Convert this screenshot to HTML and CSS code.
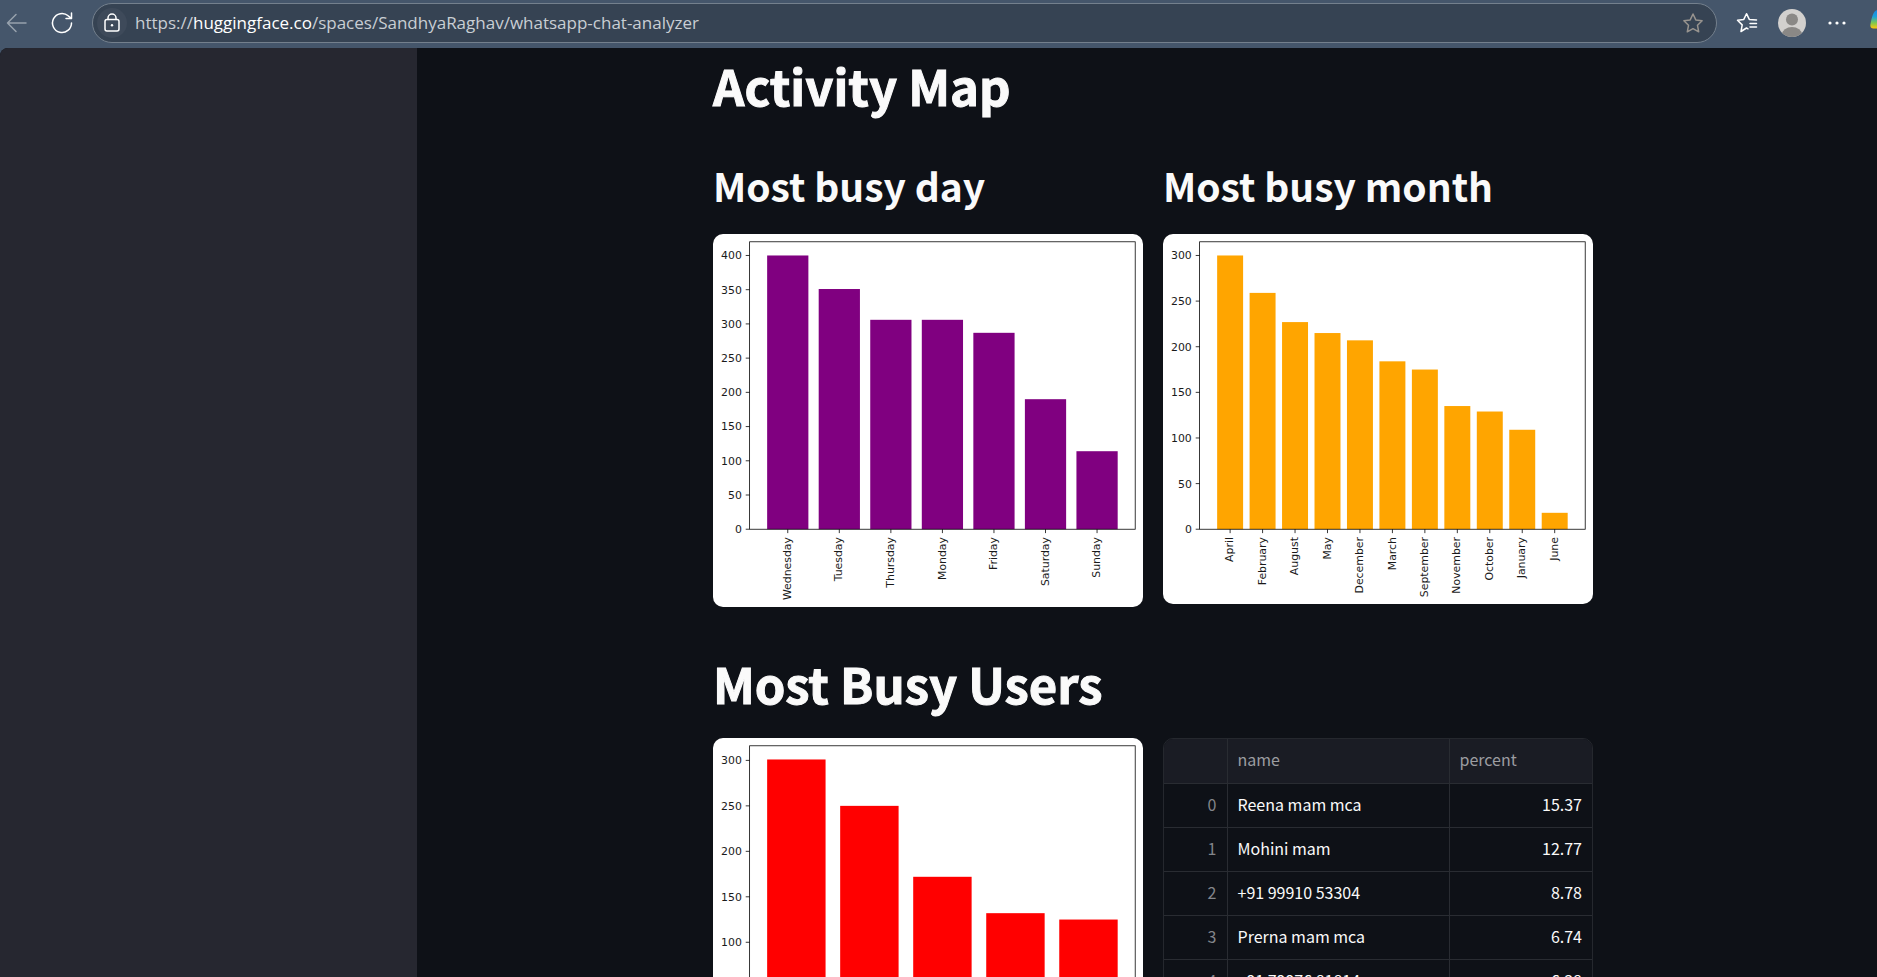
FILE: index.html
```html
<!DOCTYPE html>
<html lang="en">
<head>
<meta charset="utf-8">
<title>whatsapp-chat-analyzer</title>
<link rel="stylesheet" href="styles.css">
</head>
<body>
<header class="toolbar">
  <button class="tool tool-back" type="button" aria-label="Back">
    <svg width="22" height="22" viewBox="0 0 22 22"><path d="M20 11H1.500M10 2.500 1.500 11l8.500 8.500"/></svg>
  </button>
  <button class="tool tool-reload" type="button" aria-label="Reload">
    <svg width="24" height="24" viewBox="0 0 24 24"><path d="M21.500 12a9.500 9.500 0 1 1-3.300-7.200L21.500 7.500M21.500 2v5.500H16"/></svg>
  </button>
  <div class="address">
    <button class="site-info" type="button" aria-label="Site information">
      <svg width="20" height="22" viewBox="0 0 20 22"><rect x="3" y="7.500" width="14" height="11.500" rx="2"/><path d="M6 7.500V6a4 4 0 0 1 8 0v1.500"/><circle class="solid" cx="10" cy="13.300" r="1.200"/></svg>
    </button>
    <a class="url" href="#">https://<span class="host">huggingface.co</span>/spaces/SandhyaRaghav/whatsapp-chat-analyzer</a>
    <button class="tool tool-star" type="button" aria-label="Add to favorites">
      <svg width="22" height="22" viewBox="0 0 22 22"><path d="M11 2l2.800 5.900 6.300.9-4.600 4.500 1.200 6.500L11 16.700l-5.700 3.100 1.200-6.500L1.900 8.800l6.300-.9z"/></svg>
    </button>
  </div>
  <button class="tool tool-favorites" type="button" aria-label="Favorites">
    <svg width="22" height="22" viewBox="0 0 22 22"><path d="M12 16.800l-1.500-.8L5 19.500l1.200-6.600L1.500 8.300l6.300-.9L10.500 1.700l2.800 5.700 7.200.6M14 11.500h6.500M14 15h6.500"/></svg>
  </button>
  <button class="tool tool-profile" type="button" aria-label="Profile">
    <svg width="28" height="28" viewBox="0 0 28 28"><clipPath id="face"><circle cx="14" cy="14" r="14"/></clipPath><g clip-path="url(#face)"><path class="face-back" d="M0 0h28v28H0z"/><circle class="face-front" cx="14" cy="10.500" r="6"/><ellipse class="face-front" cx="14" cy="25.500" rx="10" ry="7.500"/></g></svg>
  </button>
  <button class="tool tool-more" type="button" aria-label="Settings and more">
    <svg width="18" height="4" viewBox="0 0 18 4"><circle cx="2" cy="2" r="1.600"/><circle cx="9" cy="2" r="1.600"/><circle cx="16" cy="2" r="1.600"/></svg>
  </button>
  <button class="tool tool-copilot" type="button" aria-label="Copilot">
    <svg width="7" height="22" viewBox="0 0 7 22"><defs><linearGradient id="pilot" x1="0" y1="0" x2="0" y2="1"><stop offset="0" stop-color="#1b86e0"/><stop offset=".35" stop-color="#1ba0dc"/><stop offset=".7" stop-color="#7ec850"/><stop offset="1" stop-color="#ffc60a"/></linearGradient></defs><path fill="url(#pilot)" d="M7 1C3 2.500 2 8 .5 15c-.6 3 .5 4.500 3 4.500H7z"/></svg>
  </button>
</header>
<div class="app">
  <aside class="sidebar"></aside>
  <main class="main">
    <div class="content">
      <h1 class="title">Activity Map</h1>
      <div class="columns">
        <section>
          <h2 class="subtitle">Most busy day</h2>
          <svg class="chart chart-day" id="chart-day" role="img" aria-label="Most busy day"></svg>
        </section>
        <section>
          <h2 class="subtitle">Most busy month</h2>
          <svg class="chart chart-month" id="chart-month" role="img" aria-label="Most busy month"></svg>
        </section>
      </div>
      <h1 class="title title-users">Most Busy Users</h1>
      <div class="columns">
        <svg class="chart chart-users" id="chart-users" role="img" aria-label="Most busy users"></svg>
        <div class="table-frame">
          <table class="users">
            <thead>
              <tr><th class="index"></th><th class="name">name</th><th class="percent">percent</th></tr>
            </thead>
            <tbody>
              <tr><td class="index">0</td><td class="name">Reena mam mca</td><td class="percent">15.37</td></tr>
              <tr><td class="index">1</td><td class="name">Mohini mam</td><td class="percent">12.77</td></tr>
              <tr><td class="index">2</td><td class="name">+91 99910 53304</td><td class="percent">8.78</td></tr>
              <tr><td class="index">3</td><td class="name">Prerna mam mca</td><td class="percent">6.74</td></tr>
              <tr><td class="index">4</td><td class="name">+91 79976 81814</td><td class="percent">6.38</td></tr>
            </tbody>
          </table>
        </div>
      </div>
    </div>
  </main>
</div>
<script src="charts.js"></script>
</body>
</html>
```

FILE: styles.css
```css
* { box-sizing: border-box; }

body {
  margin: 0;
  height: 100vh;
  display: flex;
  flex-direction: column;
  overflow: hidden;
  background: #45566b;
  color: #fafafa;
  font-family: "Noto Sans CJK SC", "Noto Sans", sans-serif;
}

button {
  display: flex;
  align-items: center;
  justify-content: center;
  padding: 0;
  border: 0;
  background: none;
}

/* Browser toolbar */
.toolbar {
  flex: none;
  display: flex;
  align-items: center;
  height: 48px;
  padding: 0 0 2px 5px;
  overflow: hidden;
}

.tool svg,
.site-info svg {
  display: block;
  fill: none;
  stroke: #ffffff;
  stroke-width: 1.5;
  stroke-linecap: round;
  stroke-linejoin: round;
}

.tool { flex: none; }
.tool-back { width: 24px; }
.tool-back svg { stroke: #97a1ad; }
.tool-reload { width: 24px; margin: 0 18px 0 21px; }

.address {
  flex: 1;
  display: flex;
  align-items: center;
  height: 40px;
  padding: 0 12px 0 4px;
  border: 1px solid #74808d;
  border-radius: 20px;
  background: #364353;
}

.site-info {
  width: 30px;
  height: 30px;
  border-radius: 50%;
  background: #3e4a5a;
}

.site-info .solid { fill: #ffffff; stroke: none; }

.url {
  flex: 1;
  margin-left: 8px;
  color: #c9ced4;
  font-family: "Open Sans", "Noto Sans", sans-serif;
  font-size: 17px;
  line-height: 24px;
  text-decoration: none;
  white-space: nowrap;
}

.host { color: #ffffff; }
.tool-star svg { stroke: #98948f; }
.tool-favorites { margin-left: 19px; }
.tool-profile { margin-left: 20px; }
.tool-profile svg { stroke: none; }
.face-back { fill: #d2d0ce; }
.face-front { fill: #8a8886; }
.tool-more { margin-left: 22px; }
.tool-more svg { fill: #ffffff; stroke: none; }
.tool-copilot { margin: 0 0 6px 24px; }
.tool-copilot svg { stroke: none; }

/* Page */
.app {
  flex: 1;
  display: flex;
  min-height: 0;
  overflow: hidden;
  border-top-left-radius: 8px;
  background: #0e1117;
}

.sidebar {
  flex: none;
  width: 417px;
  background: #262730;
}

.main {
  flex: 1;
  padding-left: 12px;
}

.content {
  max-width: 880px;
  margin: 0 auto;
}

.title {
  margin: 0;
  padding: 7px 0 23px;
  font-size: 49px;
  font-weight: 700;
  line-height: 60px;
  -webkit-text-stroke: 1px currentColor;
}

.title-users { padding: 46px 0 25px; }

.columns {
  display: grid;
  grid-template-columns: 1fr 1fr;
  gap: 20px;
  align-items: start;
}

.subtitle {
  margin: 0;
  padding: 21px 0 23px;
  font-size: 39px;
  font-weight: 700;
  line-height: 52px;
}

.chart {
  display: block;
  width: 100%;
  border-radius: 10px;
  background: #ffffff;
}

.chart-day { --bar: #800080; }
.chart-month { --bar: #ffa500; }
.chart-users { --bar: #ff0000; }

.chart .bar { fill: var(--bar); }
.chart .line { fill: none; stroke: #000000; stroke-width: 1; }
.chart text {
  fill: #1a1a1a;
  font-family: "DejaVu Sans", sans-serif;
  font-size: 14px;
  text-anchor: end;
}

.table-frame {
  overflow: hidden;
  border: 1px solid #25282e;
  border-radius: 10px;
}

.users {
  width: 100%;
  table-layout: fixed;
  border-collapse: collapse;
  font-size: 16px;
  line-height: 24px;
}

.users th,
.users td {
  height: 44px;
  padding: 0 10px 3px;
  border-bottom: 1px solid #292c32;
  border-right: 1px solid #292c32;
  font-weight: 400;
  text-align: left;
}

.users th {
  background: #1a1c24;
  color: #9c9da1;
}

.users .index { width: 63px; color: #83858a; text-align: right; }
.users .percent { width: 143px; border-right: 0; }
.users td.percent { text-align: right; }
```

FILE: charts.js
```js
const NS = "http://www.w3.org/2000/svg";
const AXES = { left: 47, top: 10, width: 495, height: 369 };

function add(parent, tag, attrs, text) {
  const node = document.createElementNS(NS, tag);
  for (const key in attrs) node.setAttribute(key, attrs[key]);
  if (text !== undefined) node.textContent = text;
  parent.appendChild(node);
}

function drawBars(id, height, values, labels) {
  const svg = document.getElementById(id);
  svg.setAttribute("viewBox", `0 0 552 ${height}`);
  const bottom = AXES.top + AXES.height;
  const step = AXES.width / ((values.length - 0.2) * 1.1);
  const margin = (AXES.width - step * (values.length - 0.2)) / 2;
  const limit = Math.max(...values) * 1.05;
  const scale = AXES.height / limit;

  values.forEach((value, i) => {
    const x = AXES.left + margin + i * step;
    const mid = x + step * 0.4;
    add(svg, "rect", { class: "bar", x, y: bottom - value * scale, width: step * 0.8, height: value * scale });
    add(svg, "path", { class: "line", d: `M${mid} ${bottom}v5` });
    if (labels[i]) {
      add(svg, "text", { transform: `translate(${mid + 4} ${bottom + 10}) rotate(-90)` }, labels[i]);
    }
  });

  for (let tick = 0; tick < limit; tick += 50) {
    const y = bottom - tick * scale;
    add(svg, "path", { class: "line", d: `M${AXES.left} ${y}h-5` });
    add(svg, "text", { x: AXES.left - 10, y: y + 5 }, tick);
  }

  add(svg, "rect", { class: "line", x: AXES.left, y: AXES.top, width: AXES.width, height: AXES.height });
}

drawBars("chart-day", 479, [400, 351, 306, 306, 287, 190, 114],
  ["Wednesday", "Tuesday", "Thursday", "Monday", "Friday", "Saturday", "Sunday"]);
drawBars("chart-month", 475, [300, 259, 227, 215, 207, 184, 175, 135, 129, 109, 18],
  ["April", "February", "August", "May", "December", "March", "September", "November", "October", "January", "June"]);
drawBars("chart-users", 470, [301, 250, 172, 132, 125], []);
```
